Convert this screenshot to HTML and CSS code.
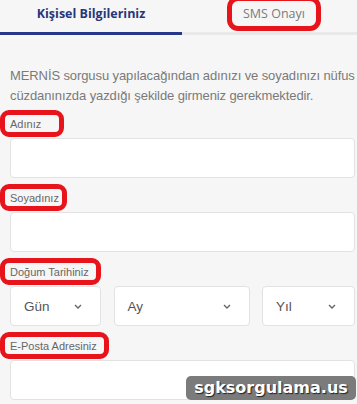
FILE: index.html
```html
<!DOCTYPE html>
<html lang="tr">
<head>
    <meta charset="UTF-8">
    <meta name="viewport" content="width=device-width, initial-scale=1.0">
    <title>Kişisel Bilgileriniz</title>
    <link rel="stylesheet" href="styles.css">
</head>

<body>
    <div class="page">
        <nav class="tabs">
            <div class="tab active">Kişisel Bilgileriniz</div>
            <div class="tab"><span class="mark mark-sms">SMS Onayı</span></div>
        </nav>

        <section class="form">
            <p class="info">MERNİS sorgusu yapılacağından adınızı ve soyadınızı nüfus cüzdanınızda yazdığı şekilde girmeniz gerekmektedir.</p>

            <div class="group">
                <label class="lbl"><span class="mark mark-wide">Adınız</span></label>
                <input type="text" class="field" />
            </div>

            <div class="group">
                <label class="lbl"><span class="mark mark-tight">Soyadınız</span></label>
                <input type="text" class="field" />
            </div>

            <div class="group">
                <label class="lbl"><span class="mark">Doğum Tarihiniz</span></label>
                <div class="dates">
                    <div class="select">Gün
                        <svg class="chev" width="8" height="5" viewBox="0 0 8 5"><path d="M1 1l3 3 3-3" fill="none" stroke="#666" stroke-width="1.4"/></svg>
                    </div>
                    <div class="select">Ay
                        <svg class="chev" width="8" height="5" viewBox="0 0 8 5"><path d="M1 1l3 3 3-3" fill="none" stroke="#666" stroke-width="1.4"/></svg>
                    </div>
                    <div class="select">Yıl
                        <svg class="chev" width="8" height="5" viewBox="0 0 8 5"><path d="M1 1l3 3 3-3" fill="none" stroke="#666" stroke-width="1.4"/></svg>
                    </div>
                </div>
            </div>

            <div class="group">
                <label class="lbl"><span class="mark">E-Posta Adresiniz</span></label>
                <input type="email" class="field" />
            </div>
        </section>

        <div class="watermark">sgksorgulama.us</div>
    </div>
</body>
</html>
```

FILE: styles.css
```css
body {
    margin           : 0;
    background-color : #f6f6f6;
    font-family      : "Liberation Sans", Arial, sans-serif;
}

.page {
    position : relative;
    width    : 357px;
    height   : 404px;
    overflow : hidden;
}

/* tabs */
.tabs {
    display              : grid;
    grid-template-columns: 182px auto;
}

.tab {
    text-align    : center;
    padding       : 6px 0 10px;
    line-height   : 16px;
    font-family   : "Open Sans", sans-serif;
    font-size     : 12.5px;
    color         : #7a7a7a;
    border-bottom : 3px solid #e9e9e9;
}

.tab.active {
    font-weight        : 700;
    color              : #26367c;
    border-bottom-color: #27388a;
}

.tab .mark-sms {
    margin-left : 9px;
}

/* form */
.form {
    padding : 31px 2px 0 10px;
}

.info {
    margin         : 0 -4px 10px 0;
    font-size      : 13px;
    letter-spacing : -0.1px;
    line-height    : 20px;
    color          : #7a7a7a;
}

.group {
    margin-bottom : 12px;
}

.lbl {
    display       : block;
    margin-bottom : 6px;
    font-size     : 11px;
    line-height   : 16px;
    color         : #666666;
}

.field {
    display          : block;
    box-sizing       : border-box;
    width            : 100%;
    height           : 40px;
    margin           : 0;
    border           : 1px solid #e2e2e2;
    border-radius    : 4px;
    background-color : #ffffff;
}

.dates {
    display              : grid;
    grid-template-columns: 91px auto 93px;
    column-gap           : 12.5px;
}

.select {
    display          : flex;
    align-items      : center;
    justify-content  : space-between;
    box-sizing       : border-box;
    height           : 40px;
    padding          : 0 18px 0 13px;
    border           : 1px solid #e2e2e2;
    border-radius    : 4px;
    background-color : #ffffff;
    font-size        : 13.5px;
    color            : #555555;
}

/* red annotation frames */
.mark {
    position : relative;
}

.mark::after {
    content       : "";
    position      : absolute;
    left          : -10px;
    right         : -12px;
    top           : -8px;
    bottom        : -7px;
    border        : 5px solid #e8141c;
    border-radius : 9px;
}

.mark-wide::after {
    right : -23px;
}

.mark-tight::after {
    right : -8px;
}

.mark-sms::after {
    left   : -16px;
    right  : -16px;
    top    : -9px;
    bottom : -9px;
    border-radius : 11px;
}

/* watermark */
.watermark {
    position         : absolute;
    left             : 186px;
    top              : 376px;
    width            : 170px;
    height           : 24px;
    line-height      : 24px;
    text-align       : center;
    border-radius    : 5px;
    background-color : #7b7b7b;
    font-family      : "DejaVu Sans", sans-serif;
    font-weight      : 700;
    font-size        : 16px;
    color            : #ffffff;
    text-shadow      : 1px 1px 1px #222222;
}
```
